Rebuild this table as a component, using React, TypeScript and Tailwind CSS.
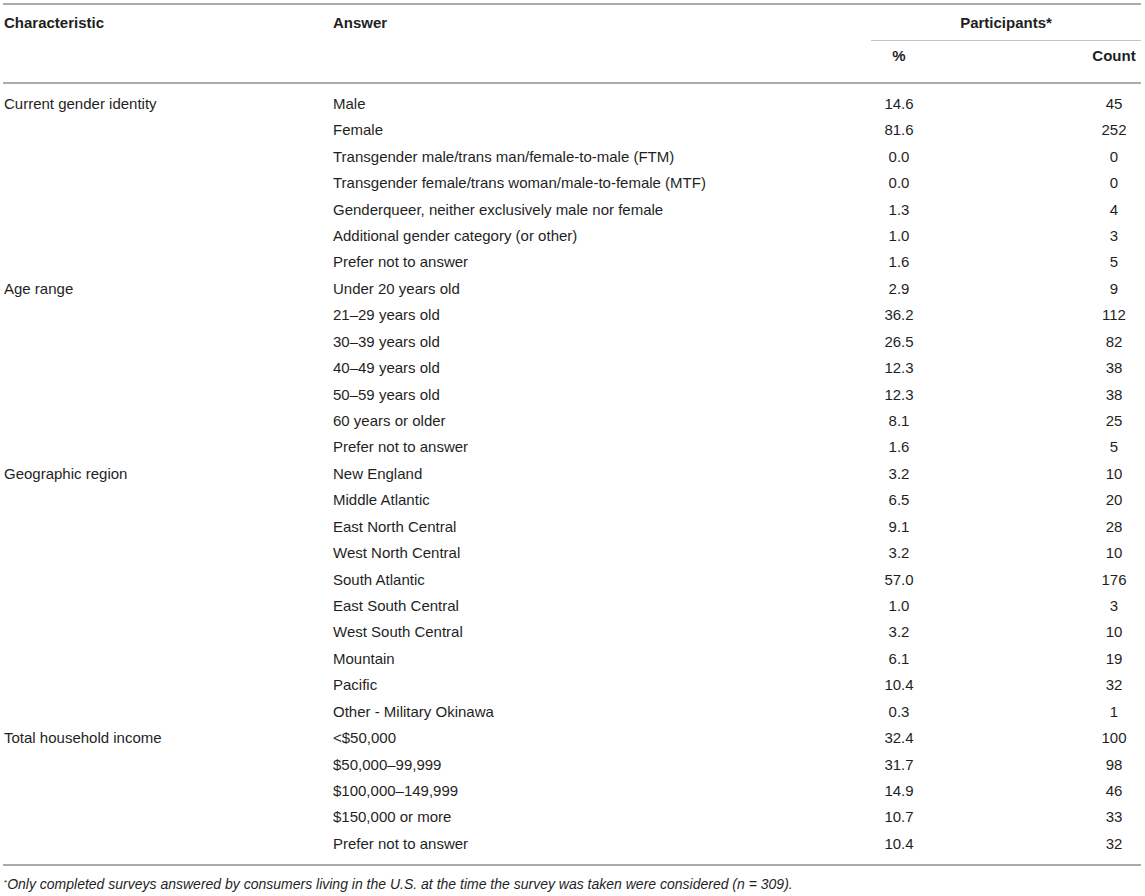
type Row = { answer: string; pct: string; count: string };
type Group = { label: string; rows: Row[] };

const groups: Group[] = [
  {
    label: 'Current gender identity',
    rows: [
      { answer: 'Male', pct: '14.6', count: '45' },
      { answer: 'Female', pct: '81.6', count: '252' },
      { answer: 'Transgender male/trans man/female-to-male (FTM)', pct: '0.0', count: '0' },
      { answer: 'Transgender female/trans woman/male-to-female (MTF)', pct: '0.0', count: '0' },
      { answer: 'Genderqueer, neither exclusively male nor female', pct: '1.3', count: '4' },
      { answer: 'Additional gender category (or other)', pct: '1.0', count: '3' },
      { answer: 'Prefer not to answer', pct: '1.6', count: '5' },
    ],
  },
  {
    label: 'Age range',
    rows: [
      { answer: 'Under 20 years old', pct: '2.9', count: '9' },
      { answer: '21–29 years old', pct: '36.2', count: '112' },
      { answer: '30–39 years old', pct: '26.5', count: '82' },
      { answer: '40–49 years old', pct: '12.3', count: '38' },
      { answer: '50–59 years old', pct: '12.3', count: '38' },
      { answer: '60 years or older', pct: '8.1', count: '25' },
      { answer: 'Prefer not to answer', pct: '1.6', count: '5' },
    ],
  },
  {
    label: 'Geographic region',
    rows: [
      { answer: 'New England', pct: '3.2', count: '10' },
      { answer: 'Middle Atlantic', pct: '6.5', count: '20' },
      { answer: 'East North Central', pct: '9.1', count: '28' },
      { answer: 'West North Central', pct: '3.2', count: '10' },
      { answer: 'South Atlantic', pct: '57.0', count: '176' },
      { answer: 'East South Central', pct: '1.0', count: '3' },
      { answer: 'West South Central', pct: '3.2', count: '10' },
      { answer: 'Mountain', pct: '6.1', count: '19' },
      { answer: 'Pacific', pct: '10.4', count: '32' },
      { answer: 'Other - Military Okinawa', pct: '0.3', count: '1' },
    ],
  },
  {
    label: 'Total household income',
    rows: [
      { answer: '<$50,000', pct: '32.4', count: '100' },
      { answer: '$50,000–99,999', pct: '31.7', count: '98' },
      { answer: '$100,000–149,999', pct: '14.9', count: '46' },
      { answer: '$150,000 or more', pct: '10.7', count: '33' },
      { answer: 'Prefer not to answer', pct: '10.4', count: '32' },
    ],
  },
];

const cols = 'grid grid-cols-[330px_538px_56px_1fr_54px]';

export default function App() {
  return (
    <div
      className="w-[1145px] h-[896px] bg-white text-[#1f1f1f] overflow-hidden"
      style={{ fontFamily: "'Liberation Sans', Arial, sans-serif" }}
    >
      <div className="pt-[3px] pl-[3px] w-[1141px]">
        <div className="h-[2px] bg-[#ababab]" />

        {/* header */}
        <div className={`${cols} text-[15px] leading-[20px] font-bold`}>
          <div className="pt-[8px] pl-[1px]">Characteristic</div>
          <div className="pt-[8px]">Answer</div>
          <div className="col-span-3 flex flex-col">
            <div className="h-[35px] pt-[8px] text-center">Participants*</div>
            <div className="h-px bg-[#c4c4c4]" />
            <div className="grid grid-cols-[56px_1fr_54px] h-[41px] pt-[5px]">
              <div className="text-center">%</div>
              <div />
              <div className="text-center">Count</div>
            </div>
          </div>
        </div>
        <div className="h-[2px] bg-[#ababab]" />

        {/* body */}
        <div className="pt-[7px] pb-[7px] text-[15px]">
          {groups.map((g) =>
            g.rows.map((r, i) => (
              <div key={g.label + i} className={`${cols} h-[26.43px] items-center`}>
                <div className="pl-[1px] whitespace-nowrap">{i === 0 ? g.label : ''}</div>
                <div className="whitespace-nowrap">{r.answer}</div>
                <div className="text-center">{r.pct}</div>
                <div />
                <div className="text-center">{r.count}</div>
              </div>
            ))
          )}
        </div>
        <div className="h-[2px] bg-[#ababab]" />

        <div className="pt-[9px] pl-[1px] text-[14px] leading-[18px] italic whitespace-nowrap">
          <sup className="text-[8px] not-italic">*</sup>
          Only completed surveys answered by consumers living in the U.S. at the time the survey was taken were considered (<i>n</i> = 309).
        </div>
      </div>
    </div>
  );
}
